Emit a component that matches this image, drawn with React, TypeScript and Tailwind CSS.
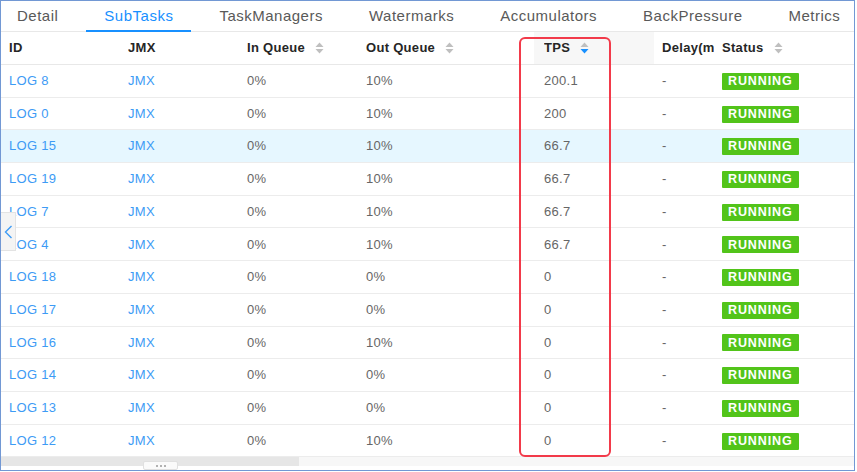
import React from "react"

type Row = {
    id: string
    inQueue: string
    outQueue: string
    tps: string
    highlight?: boolean
}

const rows: Row[] = [
    { id: "LOG 8", inQueue: "0%", outQueue: "10%", tps: "200.1" },
    { id: "LOG 0", inQueue: "0%", outQueue: "10%", tps: "200" },
    { id: "LOG 15", inQueue: "0%", outQueue: "10%", tps: "66.7", highlight: true },
    { id: "LOG 19", inQueue: "0%", outQueue: "10%", tps: "66.7" },
    { id: "LOG 7", inQueue: "0%", outQueue: "10%", tps: "66.7" },
    { id: "LOG 4", inQueue: "0%", outQueue: "10%", tps: "66.7" },
    { id: "LOG 18", inQueue: "0%", outQueue: "0%", tps: "0" },
    { id: "LOG 17", inQueue: "0%", outQueue: "0%", tps: "0" },
    { id: "LOG 16", inQueue: "0%", outQueue: "10%", tps: "0" },
    { id: "LOG 14", inQueue: "0%", outQueue: "0%", tps: "0" },
    { id: "LOG 13", inQueue: "0%", outQueue: "0%", tps: "0" },
    { id: "LOG 12", inQueue: "0%", outQueue: "10%", tps: "0" },
]

const tabs = ["Detail", "SubTasks", "TaskManagers", "Watermarks", "Accumulators", "BackPressure", "Metrics"]

const SortIcon = ({ active }: { active?: boolean }) => (
    <svg width="9" height="12" viewBox="0 0 9 12" className="ml-[10px] shrink-0">
        <path d="M4.5 0.5 L8.5 5 L0.5 5 Z" fill="#bfbfbf" />
        <path d="M0.5 7 L8.5 7 L4.5 11.5 Z" fill={active ? "#1890ff" : "#bfbfbf"} />
    </svg>
)

const HeadCell = ({ label, width, sort, active, bg }: { label: string; width: string; sort?: boolean; active?: boolean; bg?: string }) => (
    <div className={`${width} ${bg ?? ""} h-full flex items-center pl-[8px] shrink-0 overflow-hidden`}>
        <span className="whitespace-nowrap overflow-hidden">{label}</span>
        {sort && <SortIcon active={active} />}
    </div>
)

export default function App() {
    return (
        <div className="w-[857px] h-[472px] bg-white relative" style={{ fontFamily: '"Liberation Sans", Arial, sans-serif' }}>
            <div className="w-[855px] h-[471px] border-[1.5px] border-[#7298d4] overflow-hidden relative flex flex-col">
                {/* Tabs */}
                <div className="h-[31px] flex items-stretch border-b border-[#e8e8e8] shrink-0 gap-[14px]">
                    {tabs.map(t => (
                        <div
                            key={t}
                            className={`px-[16px] flex items-center text-[15px] tracking-[0.5px] relative ${t === "SubTasks" ? "text-[#1890ff]" : "text-[#595959]"}`}
                        >
                            {t}
                            {t === "SubTasks" && <div className="absolute left-[-2px] right-[-2px] bottom-[-1px] h-[2px] bg-[#1890ff]" />}
                        </div>
                    ))}
                </div>

                {/* Header */}
                <div className="h-[33px] flex border-b border-[#e8e8e8] text-[13px] font-semibold text-[#262626] tracking-[0.3px] shrink-0">
                    <HeadCell label="ID" width="w-[119px]" />
                    <HeadCell label="JMX" width="w-[119px]" />
                    <HeadCell label="In Queue" width="w-[119px]" sort />
                    <HeadCell label="Out Queue" width="w-[176px]" sort />
                    <HeadCell label="TPS" width="w-[120px] pl-[10px]" sort active bg="bg-[#f7f7f7]" />
                    <HeadCell label="Delay(ms)" width="w-[60px]" />
                    <HeadCell label="Status" width="flex-1" sort />
                </div>

                {/* Body */}
                <div className="flex flex-col text-[13px] tracking-[0.3px]">
                    {rows.map(r => (
                        <div key={r.id} className={`h-[32.7px] flex items-center border-b border-[#ececec] ${r.highlight ? "bg-[#e6f7ff]" : ""}`}>
                            <div className="w-[119px] pl-[8px] text-[#3d9bf5]">{r.id}</div>
                            <div className="w-[119px] pl-[8px] text-[#3d9bf5]">JMX</div>
                            <div className="w-[119px] pl-[8px] text-[#666]">{r.inQueue}</div>
                            <div className="w-[176px] pl-[8px] text-[#666]">{r.outQueue}</div>
                            <div className="w-[120px] pl-[10px] text-[#666]">{r.tps}</div>
                            <div className="w-[60px] pl-[8px] text-[#666]">-</div>
                            <div className="flex-1 pl-[8px]">
                                <span className="inline-flex items-center h-[17px] px-[6px] bg-[#52c41a] text-white font-bold text-[12.5px] tracking-[0.9px] rounded-[1px]">
                                    RUNNING
                                </span>
                            </div>
                        </div>
                    ))}
                </div>

                {/* Horizontal scrollbar */}
                <div className="h-[9px] bg-[#f7f7f7] relative shrink-0">
                    <div className="w-[298px] h-full bg-[#e6e6e6]" />
                    <div className="absolute left-[142px] top-[4px] w-[35px] h-[9px] bg-[#fafafa] border border-[#e0e0e0] rounded-[2px] flex items-center justify-center gap-[2px]">
                        <span className="w-[2px] h-[2px] rounded-full bg-[#999]" />
                        <span className="w-[2px] h-[2px] rounded-full bg-[#999]" />
                        <span className="w-[2px] h-[2px] rounded-full bg-[#999]" />
                    </div>
                </div>

                {/* Collapse handle on the left */}
                <div className="absolute left-0 top-[211px] w-[15px] h-[39px] bg-[#f4f4f4] border border-l-0 border-[#e3e3e3] flex items-center justify-center">
                    <svg width="9" height="14" viewBox="0 0 9 14">
                        <path d="M7.5 1 L1.5 7 L7.5 13" stroke="#3d9bf5" strokeWidth="1.4" fill="none" />
                    </svg>
                </div>

                {/* Red annotation box */}
                <div className="absolute left-[518px] top-[36px] w-[92px] h-[420px] border-[2.5px] border-[#f23a4a] rounded-[6px] pointer-events-none" />
            </div>
        </div>
    )
}
